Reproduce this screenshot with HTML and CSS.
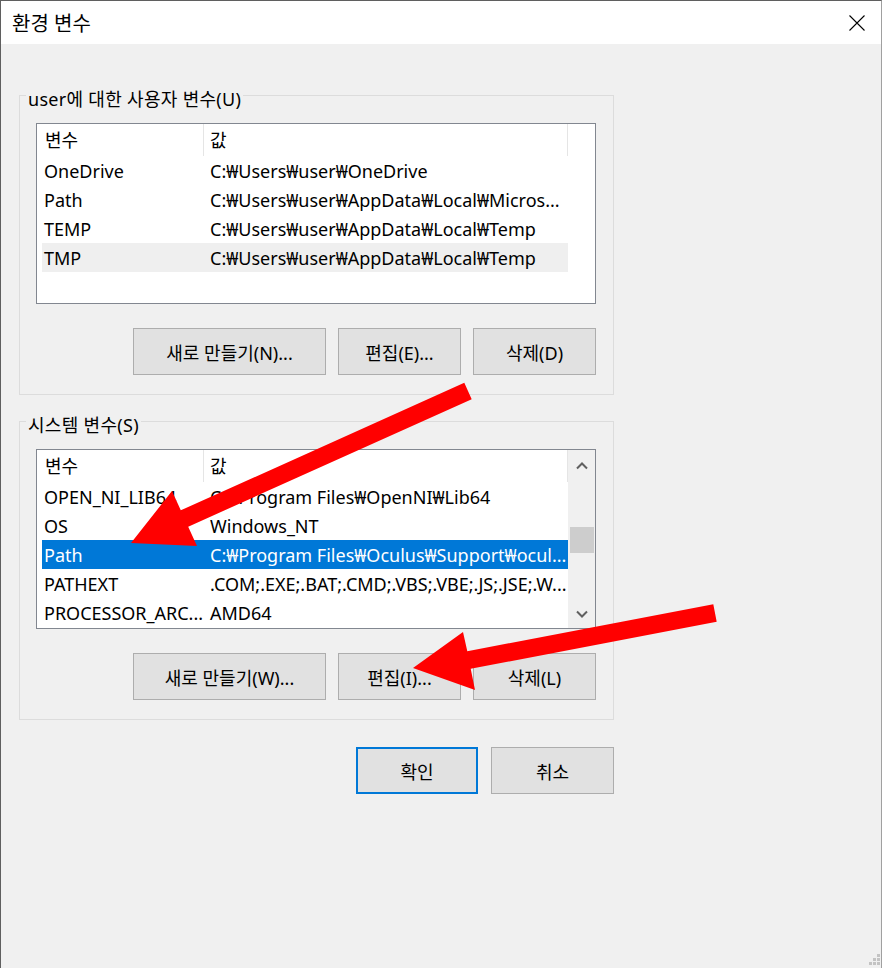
FILE: index.html
```html
<!DOCTYPE html>
<html lang="ko">
<head>
    <meta charset="UTF-8">
    <title>환경 변수</title>
    <link rel="stylesheet" href="styles.css">
</head>
<body>
    <div class="window">
        <div class="titlebar">
            <span class="title">환경 변수</span>
            <svg class="close" width="16" height="16" viewBox="0 0 16 16">
                <path d="M0.5 0.5 L15.5 15.5 M15.5 0.5 L0.5 15.5" stroke="#000" stroke-width="1.1" fill="none"/>
            </svg>
        </div>

        <div class="dialog">
            <div class="group">
                <div class="group-label">user에 대한 사용자 변수(U)</div>
                <div class="list list-user">
                    <div class="list-main">
                        <div class="list-head">
                            <span class="col-name">변수</span>
                            <span class="col-value">값</span>
                        </div>
                        <div class="row">
                            <span class="col-name">OneDrive</span>
                            <span class="col-value">C:₩Users₩user₩OneDrive</span>
                        </div>
                        <div class="row">
                            <span class="col-name">Path</span>
                            <span class="col-value">C:₩Users₩user₩AppData₩Local₩Micros...</span>
                        </div>
                        <div class="row">
                            <span class="col-name">TEMP</span>
                            <span class="col-value">C:₩Users₩user₩AppData₩Local₩Temp</span>
                        </div>
                        <div class="row hover">
                            <span class="col-name">TMP</span>
                            <span class="col-value">C:₩Users₩user₩AppData₩Local₩Temp</span>
                        </div>
                    </div>
                </div>
                <div class="buttons">
                    <button class="btn btn-wide">새로 만들기(N)...</button>
                    <button class="btn">편집(E)...</button>
                    <button class="btn">삭제(D)</button>
                </div>
            </div>

            <div class="group group-system">
                <div class="group-label">시스템 변수(S)</div>
                <div class="list list-system">
                    <div class="list-main">
                        <div class="list-head">
                            <span class="col-name">변수</span>
                            <span class="col-value">값</span>
                        </div>
                        <div class="row">
                            <span class="col-name">OPEN_NI_LIB64</span>
                            <span class="col-value">C:₩Program Files₩OpenNI₩Lib64</span>
                        </div>
                        <div class="row">
                            <span class="col-name">OS</span>
                            <span class="col-value">Windows_NT</span>
                        </div>
                        <div class="row selected">
                            <span class="col-name">Path</span>
                            <span class="col-value">C:₩Program Files₩Oculus₩Support₩ocul...</span>
                        </div>
                        <div class="row">
                            <span class="col-name">PATHEXT</span>
                            <span class="col-value">.COM;.EXE;.BAT;.CMD;.VBS;.VBE;.JS;.JSE;.W...</span>
                        </div>
                        <div class="row">
                            <span class="col-name">PROCESSOR_ARC...</span>
                            <span class="col-value">AMD64</span>
                        </div>
                    </div>
                    <div class="scrollbar">
                        <div class="scroll-btn scroll-up">
                            <svg width="12" height="8" viewBox="0 0 12 8">
                                <path d="M1 6.5 L6 1.5 L11 6.5" stroke="#606060" stroke-width="2" fill="none"/>
                            </svg>
                        </div>
                        <div class="scroll-track">
                            <div class="scroll-thumb"></div>
                        </div>
                        <div class="scroll-btn scroll-down">
                            <svg width="12" height="8" viewBox="0 0 12 8">
                                <path d="M1 1.5 L6 6.5 L11 1.5" stroke="#606060" stroke-width="2" fill="none"/>
                            </svg>
                        </div>
                    </div>
                </div>
                <div class="buttons">
                    <button class="btn btn-wide">새로 만들기(W)...</button>
                    <button class="btn">편집(I)...</button>
                    <button class="btn">삭제(L)</button>
                </div>
            </div>

            <div class="footer">
                <button class="btn btn-ok">확인</button>
                <button class="btn btn-cancel">취소</button>
            </div>

            <svg class="grip" width="11" height="11" viewBox="0 0 11 11">
                <rect x="8" y="0" width="3" height="3" fill="#c3c3c3"/>
                <rect x="4" y="4" width="3" height="3" fill="#c3c3c3"/>
                <rect x="8" y="4" width="3" height="3" fill="#c3c3c3"/>
                <rect x="0" y="8" width="3" height="3" fill="#c3c3c3"/>
                <rect x="4" y="8" width="3" height="3" fill="#c3c3c3"/>
                <rect x="8" y="8" width="3" height="3" fill="#c3c3c3"/>
            </svg>
        </div>
    </div>

    <!-- red arrows drawn over the screenshot -->
    <svg class="arrows" width="882" height="968" viewBox="0 0 882 968">
        <polygon fill="#ff0000" points="131,543 172,491 180.8,510.3 464.3,382.8 471.7,399.2 188.2,526.7 197,546"/>
        <polygon fill="#ff0000" points="413,668 463,632 467.3,651.2 713.3,604.2 716.7,621.8 470.7,668.8 475,690"/>
    </svg>
</body>
</html>
```

FILE: styles.css
```css
body {
    margin: 0;
    position: relative;
    font-family: "Noto Sans", "Noto Sans CJK KR", sans-serif;
    font-size: 18px;
    color: #000;
    background: #f0f0f0;
}

.window {
    height: 968px;
    box-sizing: border-box;
    border-top: 1px solid #5f5f5f;
    border-left: 1px solid #5f5f5f;
    border-right: 1px solid #a0a0a0;
    background: #f0f0f0;
    display: flex;
    flex-direction: column;
}

.titlebar {
    height: 43px;
    background: #fff;
    display: flex;
    align-items: center;
    justify-content: space-between;
    padding: 0 16px 0 11px;
}

.title {
    font-size: 20px;
}

.close {
    display: block;
    margin-top: 1px;
}

.dialog {
    flex: 1;
    display: flex;
    flex-direction: column;
    padding-left: 18px;
}

.group {
    width: 595px;
    box-sizing: border-box;
    border: 1px solid #dcdcdc;
    margin-top: 51px;
    padding: 0 17px 19px 16px;
    display: flex;
    flex-direction: column;
}

.group-system {
    margin-top: 26px;
}

.group-label {
    align-self: flex-start;
    height: 22px;
    line-height: 22px;
    margin: -8px 0 13px -10px;
    padding: 0 2px;
    background: #f0f0f0;
    white-space: nowrap;
    letter-spacing: 0.3px;
}

.list {
    height: 181px;
    box-sizing: border-box;
    border: 1px solid #828790;
    background: #fff;
    display: flex;
}

.list-system {
    height: 180px;
}

.list-main {
    flex: 1;
    padding-left: 5px;
    overflow: hidden;
}

.list-head,
.row {
    width: 526px;
    display: flex;
    white-space: nowrap;
}

.list-head {
    height: 32px;
    line-height: 33px;
}

.row {
    height: 29px;
    line-height: 30px;
}

.col-name {
    width: 162px;
    box-sizing: border-box;
    padding-left: 2px;
    overflow: hidden;
}

.col-value {
    width: 364px;
    box-sizing: border-box;
    padding-left: 6px;
    overflow: hidden;
}

.list-head .col-name {
    padding-left: 3px;
    border-right: 1px solid #e5e5e5;
}

.list-head .col-value {
    border-right: 1px solid #e5e5e5;
}

.row.hover {
    background: #efefef;
}

.row.selected {
    background: #0078d7;
    color: #fff;
}

.scrollbar {
    width: 27px;
    background: #f0f0f0;
    display: flex;
    flex-direction: column;
}

.scroll-btn {
    display: flex;
    align-items: center;
    justify-content: center;
}

.scroll-up {
    height: 32px;
}

.scroll-down {
    height: 28px;
}

.scroll-track {
    flex: 1;
}

.scroll-thumb {
    height: 26px;
    margin: 45px 1px 0 2px;
    background: #cdcdcd;
}

.buttons {
    display: flex;
    justify-content: flex-end;
    gap: 12px;
    margin-top: 24px;
}

.btn {
    width: 123px;
    height: 47px;
    box-sizing: border-box;
    border: 1px solid #adadad;
    background: #e1e1e1;
    font-family: inherit;
    font-size: 18px;
    color: #000;
    padding: 0;
    white-space: nowrap;
}

.btn-wide {
    width: 193px;
}

.footer {
    width: 595px;
    display: flex;
    justify-content: flex-end;
    gap: 13px;
    margin-top: 27px;
}

.btn-ok {
    width: 122px;
    border: 2px solid #0078d7;
}

.grip {
    display: block;
    margin-top: auto;
    align-self: flex-end;
    margin-right: 1px;
    margin-bottom: 3px;
}

.arrows {
    position: absolute;
    left: 0;
    top: 0;
    pointer-events: none;
}
```
